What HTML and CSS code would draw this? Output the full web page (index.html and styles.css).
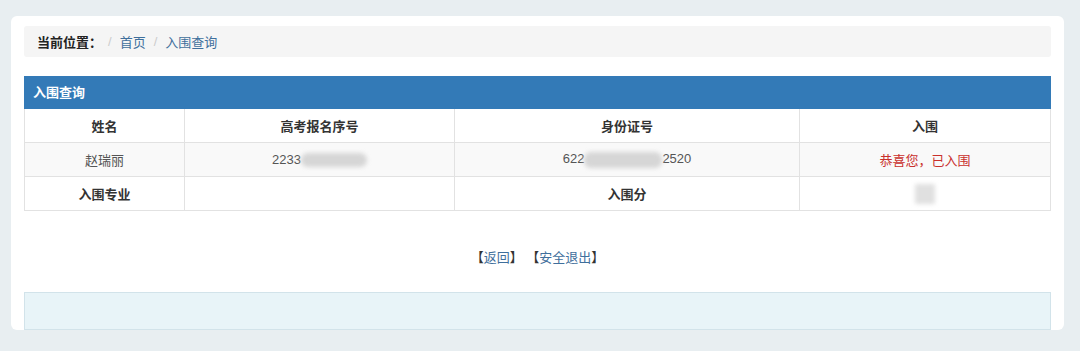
FILE: index.html
```html
<!DOCTYPE html>
<html lang="zh-CN">
<head>
  <meta charset="UTF-8" />
  <meta name="viewport" content="width=device-width, initial-scale=1" />
  <title>入围查询</title>
  <link rel="stylesheet" href="styles.css">
</head>
<body>
  <div class="card">
    <!-- 面包屑 -->
    <div class="breadcrumb">
      <span class="crumb-label">当前位置：</span>
      <span class="sep">/</span>
      <a href="#">首页</a>
      <span class="sep">/</span>
      <a href="#">入围查询</a>
    </div>

    <!-- 查询结果 -->
    <div class="panel">
      <div class="panel-heading">入围查询</div>
      <table class="result">
        <colgroup>
          <col style="width:160px">
          <col style="width:270px">
          <col style="width:345px">
          <col>
        </colgroup>
        <tr class="head">
          <td>姓名</td>
          <td>高考报名序号</td>
          <td>身份证号</td>
          <td>入围</td>
        </tr>
        <tr class="striped">
          <td>赵瑞丽</td>
          <td class="num">2233<span class="blur blur-a"></span></td>
          <td class="num">622<span class="blur blur-b"></span>2520</td>
          <td class="ok">恭喜您，已入围</td>
        </tr>
        <tr>
          <td class="strong">入围专业</td>
          <td></td>
          <td class="strong">入围分</td>
          <td><span class="blur blur-c"></span></td>
        </tr>
      </table>
    </div>

    <div class="actions">
      【<a href="#">返回</a>】 【<a href="#">安全退出</a>】
    </div>

    <div class="info-box"></div>
  </div>
</body>
</html>
```

FILE: styles.css
```css
/* ===== 基础 ===== */
body {
  margin: 0;
  background-color: #e8eef1;
  font-family: "Liberation Sans", "Noto Sans CJK SC", sans-serif;
  font-size: 13px;
  color: #333;
}
a {
  color: #3f6f9c;
  text-decoration: none;
}
.card {
  width: 1027px;
  margin: 16px 0 0 11px;
  padding: 10px 13px 0;
  background-color: #fff;
  border-radius: 6px;
}

/* ===== 面包屑 ===== */
.breadcrumb {
  height: 31px;
  display: flex;
  align-items: center;
  padding-left: 13px;
  background-color: #f5f5f5;
  border-radius: 3px;
}
.crumb-label {
  font-weight: bold;
  color: #222;
  margin-right: -2px;
}
.sep {
  color: #ccc;
  margin: 0 8px;
}

/* ===== 面板 + 表格 ===== */
.panel {
  margin-top: 19px;
}
.panel-heading {
  height: 33px;
  line-height: 33px;
  padding-left: 9px;
  background-color: #337ab7;
  color: #fff;
  font-weight: bold;
}
.result {
  width: 100%;
  border-collapse: collapse;
  table-layout: fixed;
}
.result td {
  height: 33px;
  padding: 0;
  border: 1px solid #e2e2e2;
  text-align: center;
  vertical-align: middle;
  color: #555;
}
.result tr:first-child td {
  border-top: none;
}
.head td,
.result .strong {
  font-weight: bold;
  color: #333;
}
.striped td {
  background-color: #f9f9f9;
}
.result .ok {
  color: #c9302c;
}
.blur {
  display: inline-block;
  vertical-align: middle;
  background-color: #d6d6d6;
  filter: blur(2px);
  border-radius: 7px;
}
.blur-a {
  width: 66px;
  height: 14px;
}
.blur-b {
  width: 78px;
  height: 16px;
}
.blur-c {
  width: 20px;
  height: 20px;
  border-radius: 1px;
  background-color: #e0e0e0;
}

/* ===== 底部 ===== */
.actions {
  padding: 37px 0 24px;
  line-height: 20px;
  text-align: center;
  color: #333;
}
.info-box {
  height: 36px;
  background-color: #e8f4f8;
  border: 1px solid #d2e3ea;
}
```
